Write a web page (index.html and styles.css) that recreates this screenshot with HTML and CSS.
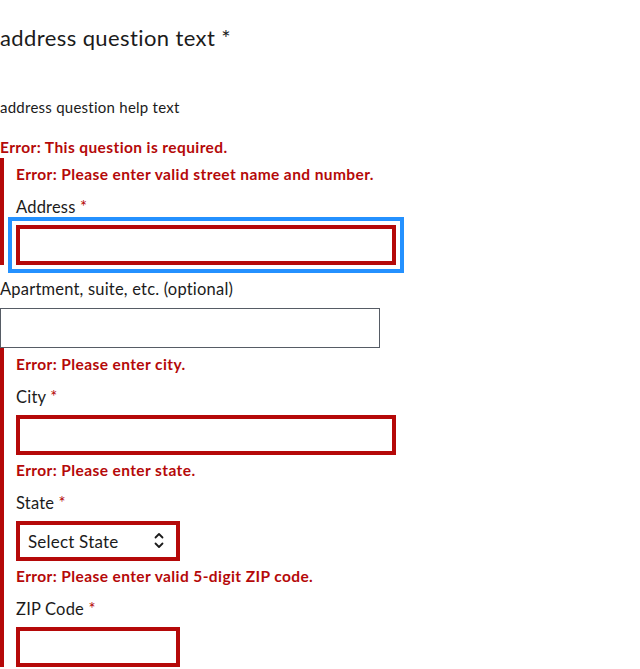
FILE: index.html
```html
<!DOCTYPE html>
<html lang="en">
<head>
<meta charset="utf-8">
<title>Address question</title>
<link rel="stylesheet" href="styles.css">
</head>
<body>
<fieldset class="question">
  <legend class="title">address question text *</legend>
  <p class="help">address question help text</p>
  <p class="error top-error">Error: This question is required.</p>

  <div class="group group-error">
    <p class="error">Error: Please enter valid street name and number.</p>
    <label class="label" for="street">Address <span class="req">*</span></label>
    <input class="input input-error is-focused" id="street" type="text">
  </div>

  <div class="group">
    <label class="label" for="apt">Apartment, suite, etc. (optional)</label>
    <input class="input input-plain" id="apt" type="text">
  </div>

  <div class="group group-error">
    <p class="error">Error: Please enter city.</p>
    <label class="label" for="city">City <span class="req">*</span></label>
    <input class="input input-error" id="city" type="text">

    <p class="error">Error: Please enter state.</p>
    <label class="label" for="state">State <span class="req">*</span></label>
    <div class="select-wrap">
      <select class="select" id="state">
        <option>Select State</option>
      </select>
      <svg class="select-icon" width="10" height="17" viewBox="0 0 10 17" aria-hidden="true">
        <path d="M1.5 5.5 L5 2 L8.5 5.5 M1.5 11.5 L5 15 L8.5 11.5" fill="none" stroke="#1b1b1b" stroke-width="1.8" stroke-linecap="round" stroke-linejoin="round"/>
      </svg>
    </div>

    <p class="error">Error: Please enter valid 5-digit ZIP code.</p>
    <label class="label" for="zip">ZIP Code <span class="req">*</span></label>
    <input class="input input-error input-short" id="zip" type="text">
  </div>
</fieldset>
</body>
</html>
```

FILE: styles.css
```css
html, body {
  margin: 0;
  padding: 0;
  background: #ffffff;
}

body {
  font-family: Lato, "Open Sans", sans-serif;
  color: #1b1b1b;
}

.question {
  border: 0;
  margin: 0;
  padding: 0;
  min-width: 0;
}

.title {
  float: left;
  width: 100%;
  padding: 0;
  margin: 25px 0 0;
  font-size: 22px;
  letter-spacing: 0.4px;
  line-height: 26px;
  font-weight: 400;
}

.help {
  clear: both;
  margin: 0;
  padding-top: 46px;
  font-size: 15px;
  letter-spacing: 0.25px;
  line-height: 20px;
}

.error {
  margin: 5px 0 0;
  font-size: 15.5px;
  letter-spacing: 0.4px;
  line-height: 20px;
  font-weight: 700;
  color: #b50909;
}

.top-error {
  margin: 21px 0 2px;
  line-height: 18px;
}

.group {
  display: flex;
  flex-direction: column;
  align-items: flex-start;
}

.group-error {
  border-left: 4px solid #b50909;
  padding: 1px 0 0 12px;
}

.label {
  display: block;
  margin-top: 12px;
  font-size: 16.5px;
  letter-spacing: 0.2px;
  line-height: 22px;
}

.req {
  color: #b50909;
}

.input {
  box-sizing: border-box;
  display: block;
  width: 380px;
  height: 40px;
  margin: 7px 0 0;
  padding: 0 8px;
  border: 1px solid #565c65;
  border-radius: 0;
  background: #ffffff;
  font: inherit;
  font-size: 16px;
}

.group > .label:first-child {
  margin-top: 13px;
}

.input-plain {
  margin-top: 8px;
}

.input-error {
  border: 4px solid #b50909;
}

.is-focused {
  outline: 4px solid #2491ff;
  outline-offset: 4px;
}

.input-short {
  width: 164px;
}

.select-wrap {
  position: relative;
  margin-top: 7px;
  width: 164px;
  height: 40px;
}

.select {
  box-sizing: border-box;
  display: block;
  width: 164px;
  height: 40px;
  margin: 0;
  padding: 0 24px 0 8px;
  border: 4px solid #b50909;
  border-radius: 0;
  background: #ffffff;
  color: #1b1b1b;
  font-family: inherit;
  font-size: 17px;
  letter-spacing: 0.2px;
  -webkit-appearance: none;
  appearance: none;
}

.select-icon {
  position: absolute;
  left: 138px;
  top: 11px;
  pointer-events: none;
}
```
